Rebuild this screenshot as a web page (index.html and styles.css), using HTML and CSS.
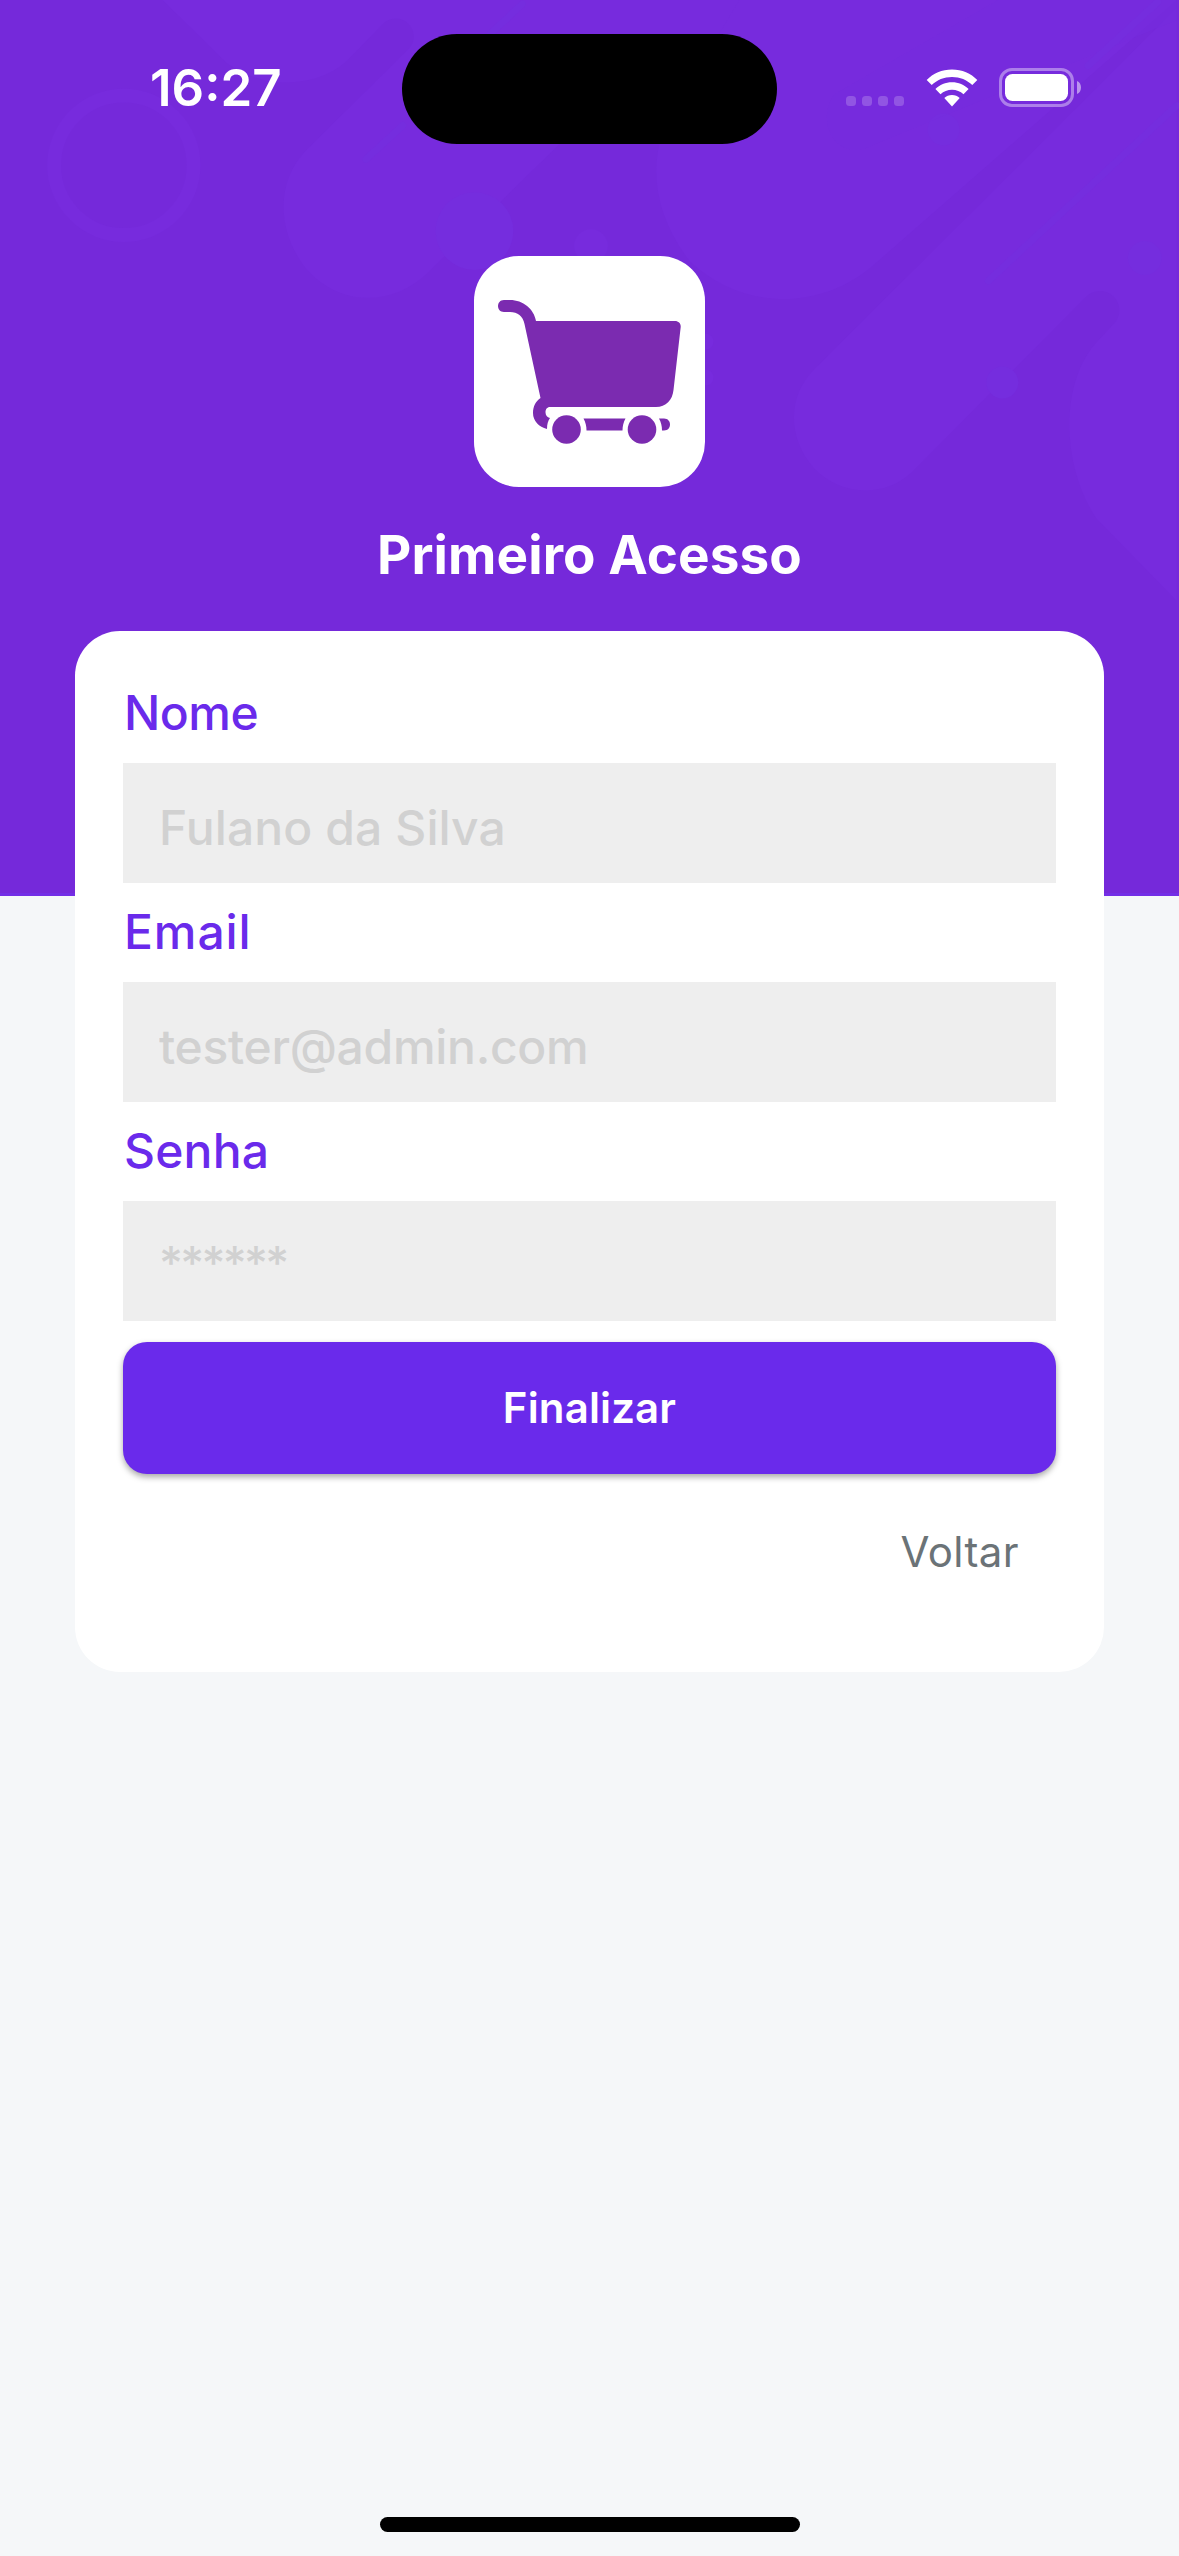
FILE: index.html
```html
<!DOCTYPE html>
<html lang="pt-BR">
<head>
<meta charset="utf-8">
<title>Primeiro Acesso</title>
<link rel="stylesheet" href="styles.css">
</head>
<body>
<div class="screen">
  <svg class="backdrop" viewBox="0 0 1179 896" aria-hidden="true">
    <g fill="#772bdd">
      <path d="M161 0L225 63C262 91 315 88 345 62L382 24A18 18 0 0 1 408 49L306 150C275 180 274 232 306 271C340 308 392 308 428 273L560 144L780 0Z"/>
      <path d="M740 0L680 100C645 150 650 210 690 262C740 310 820 315 877 264L1179 0Z"/>
      <path d="M1179 8L815 371C788 398 788 440 815 470C842 498 885 500 913 474L1088 298A19 19 0 0 1 1116 325L1100 342C1062 382 1062 465 1098 520L1179 603Z"/>
      <circle cx="591" cy="247" r="17"/>
      <circle cx="706" cy="343" r="8"/>
      <circle cx="706" cy="379" r="8"/>
    </g>
    <circle cx="122" cy="166" r="70" fill="none" stroke="#772bdd" stroke-width="14"/>
    <g fill="#752dde">
      <circle cx="474" cy="232" r="39"/>
      <circle cx="1004" cy="384" r="16"/>
      <circle cx="1147" cy="259" r="17"/>
      <circle cx="945" cy="130" r="16"/>
      <path d="M1000 0H1179V20L875 145C840 165 815 125 835 95Z" opacity=".4"/>
    </g>
    <g stroke="#752dde" stroke-width="7" stroke-linecap="round">
      <path d="M365 160L402 126M490 34L522 4M990 282L1179 106M1090 66L1160 2"/>
    </g>
  </svg>

  <header class="status">
    <time class="clock">16:27</time>
    <div class="island"></div>
    <div class="indicators">
      <div class="signal"><i></i><i></i><i></i><i></i></div>
      <svg class="wifi" viewBox="0 0 52 38" aria-hidden="true">
        <g fill="#fff">
          <path d="M26 0.500C36 .5 45 4.500 51.300 11L46.300 16C41 10.800 34 7.900 26 7.900S11 10.800 5.700 16L.7 11C7 4.500 16 .5 26 .5Z"/>
          <path d="M26 13.300C32.500 13.300 38.300 15.900 42.600 20.100L37.500 25.200C34.400 22.300 30.400 20.700 26 20.700S17.600 22.300 14.500 25.200L9.400 20.100C13.700 15.900 19.500 13.300 26 13.300Z"/>
          <path d="M26 26C29 26 31.700 27.100 33.700 29L26 37.500L18.300 29C20.300 27.100 23 26 26 26Z"/>
        </g>
      </svg>
      <svg class="battery" viewBox="0 0 82 39" aria-hidden="true">
        <rect x="1.500" y="1.500" width="72" height="36" rx="11.500" fill="none" stroke="#fff" stroke-opacity=".4" stroke-width="3"/>
        <rect x="6" y="6" width="63" height="27" rx="7.500" fill="#fff"/>
        <path d="M78 13C80.700 14.200 82 16.500 82 19.500S80.700 24.800 78 26Z" fill="#fff" opacity=".5"/>
      </svg>
    </div>
  </header>

  <main class="content">
    <div class="logo">
      <svg viewBox="0 0 231 231" aria-hidden="true">
        <g fill="#7b2bb0">
          <path d="M30 44H36C49 44 60 53 62 65H201C204.500 65 207 67.500 206.700 71L199.500 134C198.500 144 192 151 182 151H76C70 151 70 161 76 162C74 165 73 168 73 173C65 171 59 165 59 157C59 150 62 145 66.500 142L50.500 68C49 60 43.500 56 36 56H30C22 56 22 44 30 44Z"/>
          <circle cx="92.500" cy="173.500" r="14.300"/>
          <circle cx="168" cy="173.500" r="14.300"/>
          <path d="M109.500 162.500H151.500C149.500 166 148.500 170 148.500 174.500H112.500C112.500 170 111.500 166 109.500 162.500Z"/>
          <path d="M185 162.500H190C198 162.500 198 174.500 190 174.500H188C188 170 187 166 185 162.500Z"/>
        </g>
      </svg>
    </div>
    <h1 class="title">Primeiro Acesso</h1>

    <form class="card">
      <label class="label label-name" for="name">Nome</label>
      <input class="field field-name" id="name" type="text" placeholder="Fulano da Silva">
      <label class="label label-email" for="email">Email</label>
      <input class="field field-email" id="email" type="text" placeholder="tester@admin.com">
      <label class="label" for="password">Senha</label>
      <input class="field field-password" id="password" type="text" placeholder="******">
      <button class="submit" type="button">Finalizar</button>
      <a class="back">Voltar</a>
    </form>
  </main>
  <div class="home-bar"></div>
</div>
</body>
</html>
```
FILE: styles.css
```css
* {
  box-sizing: border-box;
}

body {
  margin: 0;
  background: #f5f7f9;
  font-family: Inter, "Liberation Sans", sans-serif;
}

.screen {
  position: relative;
  display: flex;
  flex-direction: column;
  align-items: center;
  width: 1179px;
  height: 2556px;
  overflow: hidden;
}

.backdrop {
  position: absolute;
  top: 0;
  left: 0;
  width: 1179px;
  height: 895.500px;
  background: #7529da;
  border-bottom: 3px solid #732ee6;
}

.status {
  position: relative;
  display: grid;
  grid-template-columns: 402px 375px 402px;
  width: 100%;
  height: 255.500px;
  padding-top: 33.500px;
  align-items: start;
}

.clock {
  padding: 24px 0 0 150px;
  font-size: 51px;
  line-height: 60px;
  font-weight: 600;
  letter-spacing: 0;
  color: #fff;
}

.island {
  height: 110.500px;
  border-radius: 56px;
  background: #000;
}

.indicators {
  display: flex;
  align-items: flex-start;
  padding: 34.500px 0 0 69px;
}

.signal {
  display: flex;
  gap: 6px;
  margin: 28px 22px 0 0;
}

.signal i {
  width: 10px;
  height: 10px;
  border-radius: 3.500px;
  background: rgba(255, 255, 255, 0.2);
}

.wifi {
  width: 52px;
  height: 38px;
  margin: 0.500px 21px 0 0;
}

.battery {
  width: 82px;
  height: 39px;
}

.content {
  position: relative;
  display: flex;
  flex-direction: column;
  align-items: center;
}

.logo {
  width: 231px;
  height: 231px;
  border-radius: 45px;
  background: #fff;
}

.logo svg {
  display: block;
}

.title {
  margin: 36px 0 44px;
  font-size: 53px;
  line-height: 64px;
  font-weight: 700;
  letter-spacing: 0.100px;
  color: #fff;
}

.card {
  display: flex;
  flex-direction: column;
  width: 1029px;
  height: 1041px;
  padding: 48px;
  border-radius: 45px;
  background: #fff;
}

.label {
  height: 84px;
  padding: 4px 0 0 1px;
  font-size: 48px;
  line-height: 60px;
  font-weight: 500;
  letter-spacing: 0.200px;
  color: #6a2aeb;
}

.label-name {
  letter-spacing: -0.500px;
}

.label-email {
  letter-spacing: 0.900px;
}

.field {
  flex: none;
  height: 120px;
  margin: 0 0 15px;
  padding: 9px 36px 0;
  border: 0;
  border-radius: 0;
  background: #eee;
  font: inherit;
  font-size: 48px;
  font-weight: 500;
  outline: 0;
}

.field::placeholder {
  color: #d1d1d1;
  opacity: 1;
}

.field-name {
  letter-spacing: 0.100px;
}

.field-email {
  letter-spacing: -0.300px;
}

.field-password {
  padding-top: 4px;
  font-size: 46px;
  letter-spacing: -2.700px;
}

.submit {
  height: 132.500px;
  margin-top: 6px;
  padding: 0;
  border: 0;
  border-radius: 24px;
  background: #6a2aeb;
  box-shadow: 0 3px 6px rgba(0, 0, 0, 0.35);
  font: inherit;
  font-size: 42px;
  font-weight: 600;
  letter-spacing: 0.150px;
  color: #fff;
}

.back {
  align-self: flex-end;
  margin: 52px 37px 0 0;
  font-size: 42px;
  line-height: 52px;
  letter-spacing: 0.400px;
  color: #6b7377;
}

.home-bar {
  width: 420px;
  height: 15px;
  margin: auto 0 24px;
  border-radius: 8px;
  background: #000;
}
```
